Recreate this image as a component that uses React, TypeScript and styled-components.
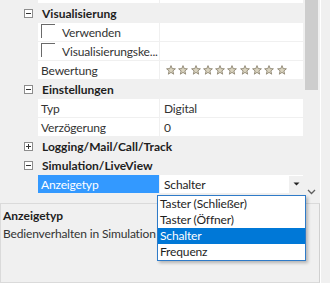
import React from "react";
import styled, { createGlobalStyle } from "styled-components";

const Global = createGlobalStyle`
  html, body { margin: 0; padding: 0; background: #f0f0f0; }
  body { font-family: Lato, "Liberation Sans", sans-serif; font-size: 12px; letter-spacing: -0.15px; color: #1e1e1e; }
`;

const Window = styled.div`
  position: relative;
  width: 320px;
  height: 283px;
  border-right: 1px solid #ffffff;
  display: flex;
  flex-direction: column;
  overflow: hidden;
`;

const TopPane = styled.div`
  display: flex;
  height: 200px;
`;

const GridViewport = styled.div`
  width: 303px;
  height: 200px;
  overflow: hidden;
  background: #f0f0f0;
`;

const GridContent = styled.div`
  margin-top: -15px;
  display: flex;
  flex-direction: column;
`;

const CategoryRow = styled.div`
  height: 19px;
  display: flex;
  align-items: center;
  background: #f0f0f0;
  font-weight: 700;
  letter-spacing: 0;
  color: #1e1e1e;
`;

const Toggle = styled.span<{ open: boolean }>`
  box-sizing: border-box;
  width: 9px;
  height: 9px;
  margin: 0 9px 0 24px;
  border: 1px solid #8c8c8c;
  position: relative;
  background: #fff;
  &::before {
    content: "";
    position: absolute;
    left: 1px;
    right: 1px;
    top: 3px;
    height: 1px;
    background: #333;
  }
  &::after {
    content: "";
    display: ${(p) => (p.open ? "none" : "block")};
    position: absolute;
    top: 1px;
    bottom: 1px;
    left: 3px;
    width: 1px;
    background: #333;
  }
`;

const PropRow = styled.div`
  box-sizing: border-box;
  height: 19px;
  display: grid;
  grid-template-columns: 38px 122px 1fr;
  border-bottom: 1px solid #f0f0f0;
`;

const Gutter = styled.div`
  background: #f0f0f0;
`;

const LabelCell = styled.div<{ selected?: boolean }>`
  display: flex;
  align-items: center;
  gap: 7px;
  padding-left: 3px;
  background: ${(p) => (p.selected ? "#3399ff" : "#ffffff")};
  color: ${(p) => (p.selected ? "#ffffff" : "#333333")};
  border-right: 1px solid #f0f0f0;
  white-space: nowrap;
  overflow: hidden;
`;

const ValueCell = styled.div`
  display: flex;
  align-items: center;
  padding-left: 4px;
  background: #ffffff;
  color: #333333;
  white-space: nowrap;
`;

const CheckBox = styled.span`
  box-sizing: border-box;
  width: 14px;
  height: 14px;
  align-self: flex-start;
  margin-top: 1px;
  border-top: 1px solid #6a6a6a;
  border-left: 1px solid #6a6a6a;
`;

const Stars = styled.div`
  display: flex;
  gap: 2.3px;
  padding-left: 2px;
`;

const EditorCell = styled.div`
  display: flex;
  align-items: center;
  background: #ffffff;
  color: #1e1e1e;
`;

const EditorText = styled.span`
  flex: 1;
  padding-left: 4px;
`;

const DropButton = styled.span`
  width: 14px;
  height: 17px;
  background: #f0f0f0;
  display: flex;
  align-items: center;
  justify-content: center;
`;

const ScrollBar = styled.div`
  width: 17px;
  height: 200px;
  background: #f0f0f0;
  display: flex;
  flex-direction: column;
  align-items: center;
`;

const Thumb = styled.div`
  width: 13px;
  height: 90px;
  background: #cdcdcd;
`;

const TrackFill = styled.div`
  flex: 1;
`;

const ArrowBox = styled.div`
  height: 17px;
  display: flex;
  align-items: center;
  justify-content: center;
`;

const Description = styled.div`
  margin-top: 3px;
  flex: 1;
  border: 1px solid #dadada;
  border-right-color: #d0d0d0;
  background: #f0f0f0;
  padding: 4px 2px;
  display: flex;
  flex-direction: column;
  gap: 2px;
`;

const DescTitle = styled.div`
  font-weight: 700;
  letter-spacing: 0;
  color: #1e1e1e;
  line-height: 16px;
`;

const DescText = styled.div`
  color: #333;
  line-height: 16px;
`;

const DropList = styled.div`
  position: absolute;
  left: 157px;
  top: 195px;
  width: 147px;
  border: 1px solid #2f7bc8;
  background: #fff;
  box-shadow: 2px 2px 3px rgba(0, 0, 0, 0.25);
  display: flex;
  flex-direction: column;
`;

const DropItem = styled.div<{ active?: boolean }>`
  height: 16px;
  line-height: 16px;
  padding-left: 2px;
  background: ${(p) => (p.active ? "#0078d7" : "#ffffff")};
  color: ${(p) => (p.active ? "#ffffff" : "#1e1e1e")};
  white-space: nowrap;
`;

const Star = () => (
  <svg width="10" height="10" viewBox="0 0 10 10">
    <path
      d="M5 0.6 L6.2 3.6 L9.4 3.8 L6.9 5.9 L7.7 9.2 L5 7.4 L2.3 9.2 L3.1 5.9 L0.6 3.8 L3.8 3.6 Z"
      fill="#d9d3bf"
      stroke="#8e8774"
      strokeWidth="0.9"
      strokeLinejoin="round"
    />
  </svg>
);

export default function App() {
  return (
    <>
      <Global />
      <Window>
        <TopPane>
          <GridViewport>
            <GridContent>
              <PropRow>
                <Gutter />
                <LabelCell />
                <ValueCell />
              </PropRow>
              <CategoryRow>
                <Toggle open />
                Visualisierung
              </CategoryRow>
              <PropRow>
                <Gutter />
                <LabelCell>
                  <CheckBox />
                  Verwenden
                </LabelCell>
                <ValueCell />
              </PropRow>
              <PropRow>
                <Gutter />
                <LabelCell>
                  <CheckBox />
                  Visualisierungske...
                </LabelCell>
                <ValueCell />
              </PropRow>
              <PropRow>
                <Gutter />
                <LabelCell>Bewertung</LabelCell>
                <ValueCell>
                  <Stars>
                    {Array.from({ length: 10 }).map((_, i) => (
                      <Star key={i} />
                    ))}
                  </Stars>
                </ValueCell>
              </PropRow>
              <CategoryRow>
                <Toggle open />
                Einstellungen
              </CategoryRow>
              <PropRow>
                <Gutter />
                <LabelCell>Typ</LabelCell>
                <ValueCell>Digital</ValueCell>
              </PropRow>
              <PropRow>
                <Gutter />
                <LabelCell>Verzögerung</LabelCell>
                <ValueCell>0</ValueCell>
              </PropRow>
              <CategoryRow>
                <Toggle open={false} />
                Logging/Mail/Call/Track
              </CategoryRow>
              <CategoryRow>
                <Toggle open />
                Simulation/LiveView
              </CategoryRow>
              <PropRow>
                <Gutter />
                <LabelCell selected>Anzeigetyp</LabelCell>
                <EditorCell>
                  <EditorText>Schalter</EditorText>
                  <DropButton>
                    <svg width="7" height="4" viewBox="0 0 7 4">
                      <path d="M0.5 0.5 L6.5 0.5 L3.5 3.5 Z" fill="#222" />
                    </svg>
                  </DropButton>
                </EditorCell>
              </PropRow>
            </GridContent>
          </GridViewport>
          <ScrollBar>
            <Thumb />
            <TrackFill />
            <ArrowBox>
              <svg width="9" height="6" viewBox="0 0 9 6">
                <path d="M1 1 L4.5 4.5 L8 1" fill="none" stroke="#606060" strokeWidth="1.3" />
              </svg>
            </ArrowBox>
          </ScrollBar>
        </TopPane>
        <Description>
          <DescTitle>Anzeigetyp</DescTitle>
          <DescText>Bedienverhalten in Simulation</DescText>
        </Description>
        <DropList>
          <DropItem>Taster (Schließer)</DropItem>
          <DropItem>Taster (Öffner)</DropItem>
          <DropItem active>Schalter</DropItem>
          <DropItem>Frequenz</DropItem>
        </DropList>
      </Window>
    </>
  );
}
